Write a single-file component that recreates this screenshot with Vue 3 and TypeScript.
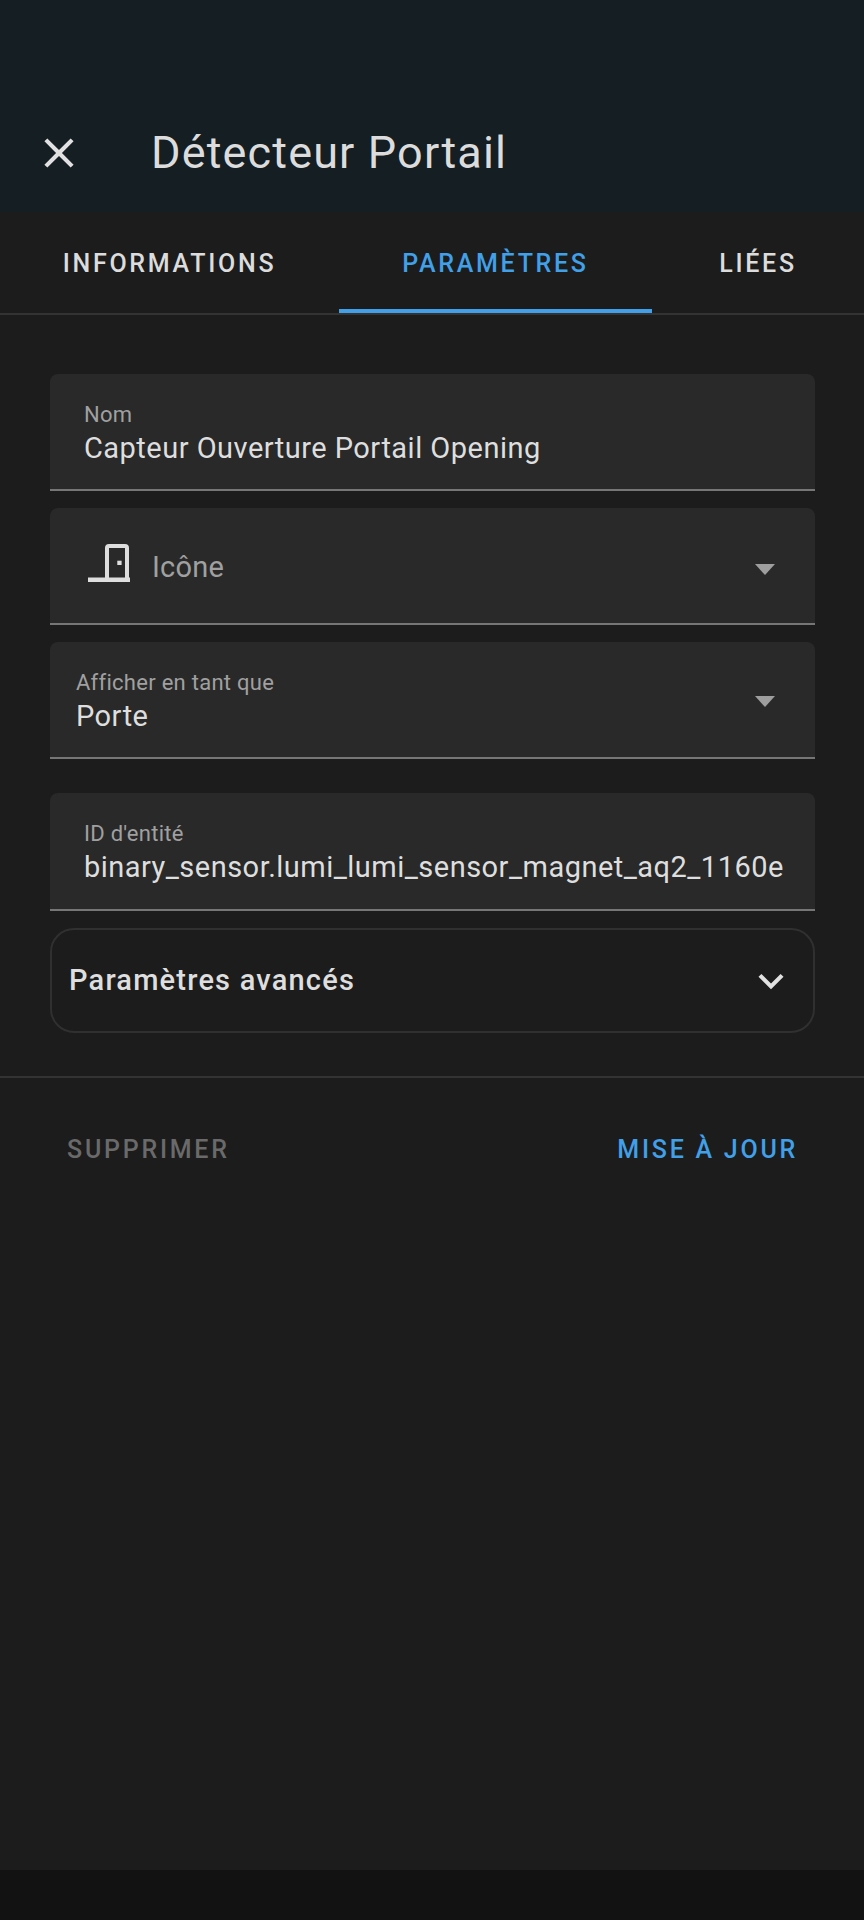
<script setup lang="ts">
const tabs = [
  { label: 'INFORMATIONS', cls: 'tab-info' },
  { label: 'PARAMÈTRES', cls: 'tab-params active' },
  { label: 'LIÉES', cls: 'tab-liees' },
]
</script>

<template>
  <div class="page">
    <header class="appbar">
      <svg class="close" viewBox="0 0 24 24"><path d="M19,6.41L17.59,5L12,10.59L6.41,5L5,6.41L10.59,12L5,17.59L6.41,19L12,13.41L17.59,19L19,17.59L13.41,12L19,6.41Z" /></svg>
      <h1 class="title">Détecteur Portail</h1>
    </header>
    <nav class="tabs">
      <div v-for="t in tabs" :key="t.label" class="tab" :class="t.cls">{{ t.label }}</div>
    </nav>
    <main class="content">
      <div class="field">
        <div class="label">Nom</div>
        <div class="value">Capteur Ouverture Portail Opening</div>
      </div>
      <div class="field select icon-field">
        <svg class="door" viewBox="0 0 42 38">
          <path fill-rule="evenodd" d="M17 33.5V4a4 4 0 0 1 4-4h16a4 4 0 0 1 4 4v29.5h1V38H0V33.5H17ZM21 33.5h16V4H21V33.5Z" />
          <rect x="29.3" y="16.7" width="4.3" height="4.3" />
        </svg>
        <span class="placeholder">Icône</span>
        <span class="caret"></span>
      </div>
      <div class="field select narrow">
        <div>
          <div class="label">Afficher en tant que</div>
          <div class="value">Porte</div>
        </div>
        <span class="caret"></span>
      </div>
      <div class="field entity">
        <div class="label">ID d'entité</div>
        <div class="value">binary_sensor.lumi_lumi_sensor_magnet_aq2_1160e</div>
      </div>
      <div class="advanced">
        <span>Paramètres avancés</span>
        <svg class="chev" viewBox="0 0 24 24"><path d="M7.41,8.58L12,13.17L16.59,8.58L18,10L12,16L6,10L7.41,8.58Z" /></svg>
      </div>
    </main>
    <footer class="actions">
      <span class="btn danger">SUPPRIMER</span>
      <span class="btn primary">MISE À JOUR</span>
    </footer>
    <div class="spacer"></div>
    <div class="navbar"></div>
  </div>
</template>

<style>
html, body { margin: 0; background: #1c1c1c; }
</style>

<style scoped>
.page {
  width: 864px;
  height: 1920px;
  display: flex;
  flex-direction: column;
  background: #1c1c1c;
  font-family: Roboto, "Liberation Sans", sans-serif;
  color: #e1e1e1;
  overflow: hidden;
}
.appbar {
  height: 212px;
  box-sizing: border-box;
  background: #141e23;
  display: flex;
  align-items: flex-end;
  padding: 0 0 34px 34px;
}
.close { width: 50px; height: 50px; fill: #e1e1e1; flex: none; }
.title {
  margin: 0 0 -2px 67px;
  font-size: 45px;
  line-height: 54px;
  font-weight: 400;
  letter-spacing: 1.15px;
  color: #dcdcdc;
}
.tabs {
  height: 103px;
  box-sizing: border-box;
  border-bottom: 2px solid #333;
  display: flex;
}
.tab {
  display: flex;
  align-items: center;
  justify-content: center;
  font-size: 25px;
  font-weight: 500;
  letter-spacing: 2.7px;
  color: #dcdcdc;
  box-sizing: border-box;
  height: 101px;
  padding-top: 2px;
}
.tab-info { width: 339px; }
.tab-params { width: 313px; }
.tab-liees { width: 212px; }
.active { color: #41a0e8; border-bottom: 4px solid #41a0e8; border-top: 4px solid transparent; padding-top: 2px; }
.content {
  padding: 59px 49px 43px 50px;
  display: flex;
  flex-direction: column;
  border-bottom: 2px solid #333;
}
.field {
  height: 117px;
  box-sizing: border-box;
  background: #292929;
  border-radius: 8px 8px 0 0;
  border-bottom: 2px solid #767676;
  padding: 27px 20px 0 34px;
  margin-bottom: 17px;
}
.label { font-size: 22px; line-height: 27px; letter-spacing: 0.27px; color: #a0a0a0; }
.value { font-size: 29px; line-height: 41px; color: #dedede; white-space: nowrap; letter-spacing: 0.48px; }
.select { display: flex; align-items: flex-start; justify-content: space-between; position: relative; }
.narrow { padding-left: 26px; }
.icon-field { align-items: center; justify-content: flex-start; padding: 0 32px 0 38px; }
.door { width: 42px; height: 38px; fill: #dedede; flex: none; margin-bottom: 5px; }
.placeholder { margin-left: 22px; font-size: 29px; letter-spacing: 0.2px; color: #a0a0a0; position: relative; top: 1px; }
.caret {
  position: absolute;
  right: 40px;
  top: 56px;
  width: 0;
  height: 0;
  border-left: 10.5px solid transparent;
  border-right: 10.5px solid transparent;
  border-top: 11px solid #9e9e9e;
}
.narrow .caret { top: 54px; }
.entity { height: 118px; margin-top: 17px; margin-bottom: 17px; }
.advanced {
  height: 105px;
  box-sizing: border-box;
  border: 2px solid #303030;
  border-radius: 24px;
  display: flex;
  align-items: center;
  justify-content: space-between;
  padding: 0 17px 0 17px;
  font-size: 29px;
  font-weight: 500;
  letter-spacing: 1.2px;
  line-height: 34px;
  color: #dedede;
}
.advanced span { margin-top: -1px; }
.chev { width: 50px; height: 50px; fill: #e1e1e1; }
.actions {
  display: flex;
  justify-content: space-between;
  padding: 57px 66px 0 67px;
  font-size: 25px;
  font-weight: 500;
  letter-spacing: 2.75px;
  line-height: 30px;
}
.danger { color: #6a6a6a; }
.primary { color: #41a0e8; }
.spacer { flex: 1; }
.navbar { height: 50px; background: #121212; }
</style>
